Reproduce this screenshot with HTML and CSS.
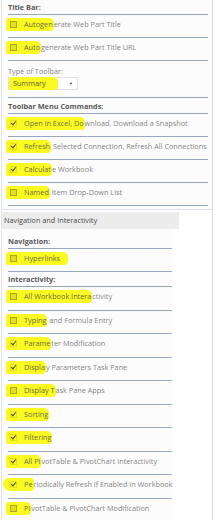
FILE: index.html
```html
<!DOCTYPE html>
<html lang="en">
<head>
    <meta charset="UTF-8">
    <title>Web Part Toolbar Settings</title>
    <link rel="stylesheet" href="styles.css">
</head>
<body>

<div class="frame">

    <!-- Title bar / toolbar settings -->
    <div class="panel">
        <div class="group-title first">Title Bar:</div>
        <div class="row"><mark class="hl"><span class="box"></span>Autogen</mark>erate Web Part Title</div>
        <div class="row"><mark class="hl"><span class="box"></span>Auto</mark>generate Web Part Title URL</div>

        <div class="toolbar-type">
            <div class="label">Type of Toolbar:</div>
            <div class="select"><mark class="hl sel">Summary</mark><span class="arrow">&#9660;</span></div>
        </div>

        <div class="group-title">Toolbar Menu Commands:</div>
        <div class="row"><mark class="hl"><span class="box checked"></span>Open in Excel, Do</mark>wnload, Download a Snapshot</div>
        <div class="row"><mark class="hl"><span class="box checked"></span>Refresh</mark> Selected Connection, Refresh All Connections</div>
        <div class="row"><mark class="hl"><span class="box checked"></span>Calculat</mark>e Workbook</div>
        <div class="row last"><mark class="hl"><span class="box"></span>Named</mark> Item Drop-Down List</div>
    </div>

    <!-- Navigation and interactivity -->
    <div class="section-bar">Navigation and Interactivity</div>
    <div class="panel narrow">
        <div class="group-title nav">Navigation:</div>
        <div class="row"><mark class="hl wide"><span class="box"></span>Hyperlinks</mark></div>

        <div class="group-title inter">Interactivity:</div>
        <div class="row tall"><mark class="hl"><span class="box"></span>All Workbook Intera</mark>ctivity</div>
        <div class="row tall"><mark class="hl"><span class="box"></span>Typing</mark> and Formula Entry</div>
        <div class="row tall"><mark class="hl"><span class="box checked"></span>Parame</mark>ter Modification</div>
        <div class="row tall"><mark class="hl"><span class="box checked"></span>Displa</mark>y Parameters Task Pane</div>
        <div class="row tall"><mark class="hl"><span class="box"></span>Display T</mark>ask Pane Apps</div>
        <div class="row tall"><mark class="hl"><span class="box checked"></span>Sorting</mark></div>
        <div class="row tall"><mark class="hl"><span class="box checked"></span>Filtering</mark></div>
        <div class="row tall"><mark class="hl"><span class="box checked"></span>All Pi</mark>votTable &amp; PivotChart Interactivity</div>
        <div class="row tall"><mark class="hl slant"><span class="box checked"></span>Pe</mark>riodically Refresh if Enabled in Workbook</div>
        <div class="row tall"><mark class="hl"><span class="box"></span>Pi</mark>votTable &amp; PivotChart Modification</div>
    </div>

</div>

</body>
</html>
```

FILE: styles.css
```css
body {
    margin: 0;
    background-color: #fff;
    font-family: "Open Sans", sans-serif;
    font-size: 7.3px;
    color: #858585;
}

.frame {
    width: 210px;
    margin-left: 1px;
    border-left: 1px solid #e4e4e4;
    border-right: 1px solid #dcdcdc;
    min-height: 520px;
}

.panel {
    padding: 0 4px 3px 6px;
    background-color: #fcfcfd;
    border-bottom: 1px solid #dde2ea;
}

.panel.narrow {
    width: 164px;
    padding-right: 0;
    border-bottom: none;
}

.group-title {
    padding-top: 2px;
    line-height: 13px;
    font-weight: bold;
    color: #5a5a5a;
    border-bottom: 1px solid #97a6c4;
}

.group-title.first {
    padding-top: 1px;
}

.group-title.nav {
    padding-top: 6px;
}

.group-title.inter {
    padding-top: 1px;
}

.row {
    height: 19px;
    padding-top: 3px;
    line-height: 13px;
    white-space: nowrap;
    border-bottom: 1px solid #97a6c4;
}

.row.tall {
    height: 19.5px;
}

.toolbar-type {
    padding: 4px 0 7px;
    border-bottom: 1px solid #97a6c4;
}

.label {
    line-height: 12px;
}

.select {
    display: flex;
    justify-content: space-between;
    align-items: center;
    width: 68px;
    height: 11px;
    border: 1px solid #e0e0e0;
    background-color: #fff;
}

.arrow {
    font-size: 4px;
    color: #444;
    margin-right: 4px;
}

.hl {
    display: inline-block;
    vertical-align: top;
    line-height: 13px;
    padding: 0 1px 0 4px;
    margin-left: -2px;
    background-color: #fafa22;
    border-radius: 3px 5px 4px 2px;
    color: #6e6e40;
}

.hl.sel {
    padding: 0 12px 0 4px;
    margin-left: 0;
    color: #5a5a30;
}

.hl.wide {
    padding-right: 8px;
}

.hl.slant {
    margin-left: -5px;
    padding-left: 7px;
    border-radius: 6px 4px 4px 8px;
}

.box {
    position: relative;
    display: inline-block;
    vertical-align: -1px;
    width: 5px;
    height: 5px;
    margin-right: 7px;
    border: 1px solid rgba(90, 90, 20, 0.4);
    background-color: rgba(130, 130, 20, 0.22);
}

.box.checked {
    background-color: transparent;
    border-color: rgba(90, 90, 20, 0.15);
}

/* tick mark drawn over the box */
.box.checked::after {
    content: "";
    position: absolute;
    left: 1px;
    top: -1px;
    width: 2px;
    height: 4px;
    border-right: 1.5px solid #4a4a28;
    border-bottom: 1.5px solid #4a4a28;
    transform: rotate(40deg);
}

.section-bar {
    width: 175px;
    height: 17px;
    margin-top: 2px;
    padding-left: 2px;
    line-height: 17px;
    background-color: #ececec;
    color: #4a4a4a;
}
```
